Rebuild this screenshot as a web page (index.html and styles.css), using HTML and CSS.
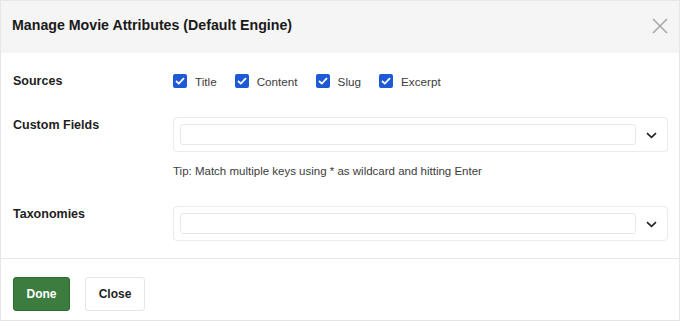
FILE: index.html
```html
<!DOCTYPE html>
<html>
<head>
<meta charset="utf-8">
<link rel="stylesheet" href="styles.css">
</head>
<body>
<div class="modal">
  <div class="modal-header">
    <h2 class="modal-title">Manage Movie Attributes (Default Engine)</h2>
    <button class="modal-close" aria-label="Close">
      <svg width="16" height="16" viewBox="0 0 16 16"><path d="M1 1 L15 15 M15 1 L1 15" stroke="#a9a9a9" stroke-width="1.6" fill="none"/></svg>
    </button>
  </div>
  <div class="modal-body">
    <div class="row row-sources">
      <div class="row-label">Sources</div>
      <div class="row-content checks">
        <label class="check"><span class="box"><svg width="10" height="8" viewBox="0 0 10 8"><path d="M1 4 L3.8 6.6 L9 1.2" stroke="#fff" stroke-width="1.8" fill="none"/></svg></span>Title</label>
        <label class="check"><span class="box"><svg width="10" height="8" viewBox="0 0 10 8"><path d="M1 4 L3.8 6.6 L9 1.2" stroke="#fff" stroke-width="1.8" fill="none"/></svg></span>Content</label>
        <label class="check"><span class="box"><svg width="10" height="8" viewBox="0 0 10 8"><path d="M1 4 L3.8 6.6 L9 1.2" stroke="#fff" stroke-width="1.8" fill="none"/></svg></span>Slug</label>
        <label class="check"><span class="box"><svg width="10" height="8" viewBox="0 0 10 8"><path d="M1 4 L3.8 6.6 L9 1.2" stroke="#fff" stroke-width="1.8" fill="none"/></svg></span>Excerpt</label>
      </div>
    </div>
    <div class="row row-custom">
      <div class="row-label">Custom Fields</div>
      <div class="row-content">
        <div class="select">
          <div class="select-input"></div>
          <div class="select-arrow"><svg width="11" height="7" viewBox="0 0 11 7"><path d="M1 1.2 L5.5 5.4 L10 1.2" stroke="#222" stroke-width="1.6" fill="none"/></svg></div>
        </div>
        <p class="tip">Tip: Match multiple keys using * as wildcard and hitting Enter</p>
      </div>
    </div>
    <div class="row row-tax">
      <div class="row-label">Taxonomies</div>
      <div class="row-content">
        <div class="select">
          <div class="select-input"></div>
          <div class="select-arrow"><svg width="11" height="7" viewBox="0 0 11 7"><path d="M1 1.2 L5.5 5.4 L10 1.2" stroke="#222" stroke-width="1.6" fill="none"/></svg></div>
        </div>
      </div>
    </div>
  </div>
  <div class="modal-footer">
    <button class="btn btn-primary">Done</button>
    <button class="btn btn-secondary">Close</button>
  </div>
</div>
</body>
</html>
```
FILE: styles.css
```css
* { box-sizing: border-box; }
html, body { margin: 0; padding: 0; background: #fff; }
body { font-family: "Liberation Sans", Arial, sans-serif; color: #1e1e1e; }

.modal {
  width: 680px;
  height: 321px;
  border: 1px solid #e6e6e6;
  border-top: 1px solid #e8e8e8;
  display: flex;
  flex-direction: column;
  background: #fff;
}

.modal-header {
  height: 52px;
  flex: none;
  background: #f5f5f5;
  display: flex;
  align-items: center;
  justify-content: space-between;
  padding: 0 11px 0 11px;
}
.modal-title {
  margin: 0;
  font-size: 14.2px;
  font-weight: bold;
  color: #1a1a1a;
  padding-bottom: 4px;
}
.modal-close {
  border: 0;
  background: none;
  padding: 0;
  width: 16px;
  height: 16px;
  display: flex;
  margin-bottom: 2px;
}

.modal-body {
  flex: 1;
  padding: 20px 11px 0 12px;
}
.row { display: flex; }
.row-label {
  width: 160px;
  flex: none;
  font-size: 12.5px;
  font-weight: bold;
  line-height: 16px;
  color: #1e1e1e;
}
.row-content { flex: 1; }

.checks { display: flex; gap: 18px; align-items: center; height: 16px; }
.check {
  display: flex;
  align-items: center;
  gap: 8px;
  font-size: 11.7px;
  color: #3c3c3c;
}
.box {
  width: 14px;
  height: 14px;
  border-radius: 2px;
  background: #1f5ad6;
  display: flex;
  align-items: center;
  justify-content: center;
}

.row-custom { margin-top: 28px; }
.row-tax { margin-top: 27px; }

.select {
  height: 35px;
  border: 1px solid #ebebeb;
  border-radius: 4px;
  display: flex;
  align-items: center;
  padding: 0 0 0 6px;
}
.select-input {
  flex: 1;
  height: 21px;
  border: 1px solid #e8e8e8;
  border-radius: 3px;
}
.select-arrow {
  width: 31px;
  display: flex;
  justify-content: center;
  align-items: center;
  padding-top: 2px;
}

.tip {
  margin: 12px 0 0 0;
  font-size: 11.5px;
  line-height: 15px;
  color: #3c3c3c;
}

.modal-footer {
  height: 62px;
  flex: none;
  border-top: 1px solid #e6e6e6;
  display: flex;
  align-items: flex-start;
  gap: 15px;
  padding: 18px 12px 0 12px;
}
.btn {
  height: 34px;
  font-family: "Liberation Sans", Arial, sans-serif;
  font-size: 12px;
  font-weight: bold;
  border-radius: 3px;
  padding: 0;
}
.btn-primary {
  width: 57px;
  background: #3c7d3f;
  border: 1px solid #2d6a30;
  color: #fff;
}
.btn-secondary {
  width: 60px;
  background: #fff;
  border: 1px solid #e6e6e6;
  color: #1e1e1e;
}
```
